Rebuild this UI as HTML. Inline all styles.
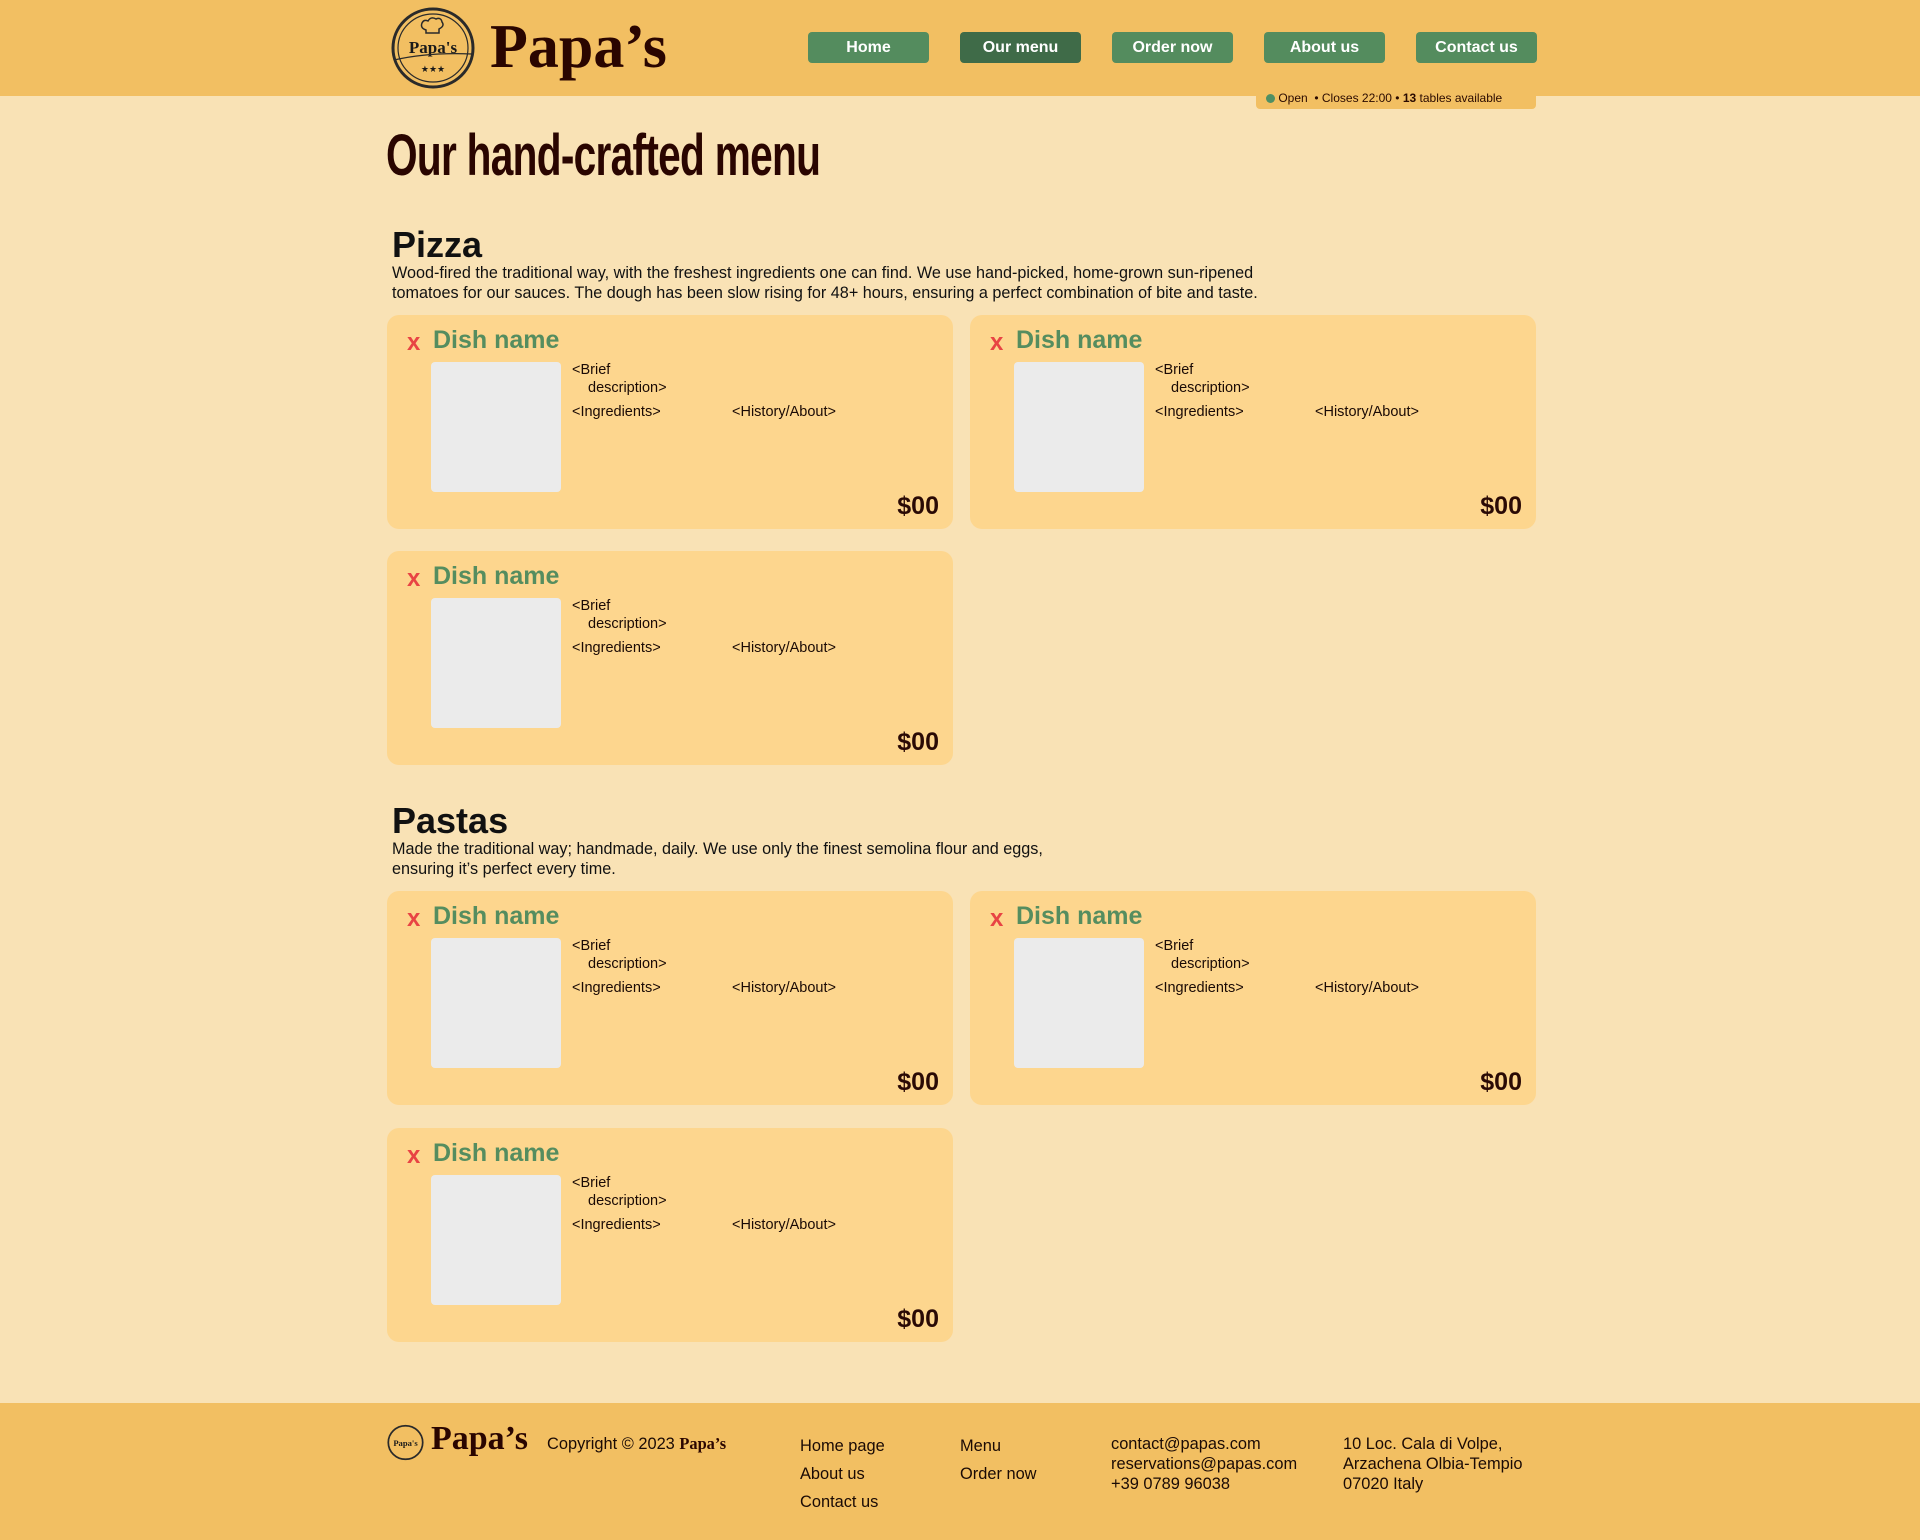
<!DOCTYPE html>
<html><head><meta charset="utf-8">
<style>
*{margin:0;padding:0;box-sizing:border-box}
body{width:1920px;height:1540px;background:#f9e2b5;font-family:"Liberation Sans",sans-serif;color:#1a0a05;position:relative;overflow:hidden}
.hdr{position:absolute;left:0;top:0;width:1920px;height:96px;background:#f2bf62}
.abs{position:absolute}
.brand{font-family:"Liberation Serif",serif;font-weight:bold;color:#2a0500}
.nav{position:absolute;top:32px;width:121px;height:31px;background:#548c5e;border-radius:4px;color:#fff;font-weight:bold;font-size:16px;text-align:center;line-height:31px}
.status{position:absolute;left:1256px;top:88px;width:280px;height:21px;background:#f2bf62;border-radius:0 0 4px 4px;font-size:12px;line-height:21px;padding-left:10px;color:#2a0a00}
.title{position:absolute;left:386px;top:122px;font-family:"Liberation Sans Narrow","Liberation Sans",sans-serif;font-weight:bold;font-size:58px;color:#2a0500;transform:scaleX(.7);transform-origin:left;letter-spacing:-1px}
h2{position:absolute;left:392px;font-size:36px;font-weight:bold;color:#111}
.desc{position:absolute;left:392px;font-size:16.2px;line-height:20px;color:#111}
.card{position:absolute;width:566px;height:214px;background:#fdd68e;border-radius:12px}
.card .x{position:absolute;left:20px;top:14px;color:#e84444;font-weight:bold;font-size:24px}
.card .dn{position:absolute;left:46px;top:11px;color:#558d5f;font-weight:bold;font-size:25px}
.card .img{position:absolute;left:44px;top:47px;width:130px;height:130px;background:#ebebeb;border-radius:4px}
.card .t{position:absolute;font-size:14.5px;color:#1a0a05}
.card .p{position:absolute;right:14px;bottom:8px;font-size:25px;font-weight:bold;color:#2a0a05}
.ftr{position:absolute;left:0;top:1403px;width:1920px;height:137px;background:#f2bf62}
.f{position:absolute;font-size:16.4px;color:#1a0a05;line-height:20px}
</style></head><body>
<div class="hdr"></div>
<svg class="abs" style="left:390px;top:6px" width="86" height="84" viewBox="0 0 86 84">
<ellipse cx="43" cy="42" rx="40" ry="39" fill="none" stroke="#2a2a2a" stroke-width="3"/>
<ellipse cx="43" cy="42" rx="35" ry="34" fill="none" stroke="#2a2a2a" stroke-width="1.2"/>
<path d="M36 24 q-6 -2 -4 -7 q2 -4 6 -2 q3 -5 8 -2 q5 -2 6 3 q3 4 -3 7 v4 h-13z" fill="none" stroke="#2a2a2a" stroke-width="1.5"/>
<text x="43" y="47" text-anchor="middle" font-family="Liberation Serif" font-size="17" font-weight="bold" fill="#1a1a1a">Papa's</text>
<path d="M4 54 q35 -8 78 -6" fill="none" stroke="#2a2a2a" stroke-width="1.3"/>
<text x="43" y="66" text-anchor="middle" font-size="9" fill="#1a1a1a">★★★</text>
</svg>
<div class="abs brand" style="left:490px;top:12px;font-size:62px">Papa’s</div>
<div class="nav" style="left:808px">Home</div>
<div class="nav" style="left:960px;background:#3f6b48">Our menu</div>
<div class="nav" style="left:1112px">Order now</div>
<div class="nav" style="left:1264px">About us</div>
<div class="nav" style="left:1416px">Contact us</div>
<div class="status"><span style="display:inline-block;width:9px;height:9px;border-radius:50%;background:#4f8f63;vertical-align:-1px"></span> Open &nbsp;• Closes 22:00 • <b>13</b> tables available</div>
<div class="title">Our hand-crafted menu</div>

<h2 style="top:224px">Pizza</h2>
<div class="desc" style="top:263px">Wood-fired the traditional way, with the freshest ingredients one can find. We use hand-picked, home-grown sun-ripened<br>tomatoes for our sauces. The dough has been slow rising for 48+ hours, ensuring a perfect combination of bite and taste.</div>

<h2 style="top:800px">Pastas</h2>
<div class="desc" style="top:839px">Made the traditional way; handmade, daily. We use only the finest semolina flour and eggs,<br>ensuring it’s perfect every time.</div>

<div class="card" style="left:387px;top:315px"><span class="x">x</span><span class="dn">Dish name</span><div class="img"></div><span class="t" style="left:185px;top:47px">&lt;Brief</span><span class="t" style="left:201px;top:65px">description&gt;</span><span class="t" style="left:185px;top:89px">&lt;Ingredients&gt;</span><span class="t" style="left:345px;top:89px">&lt;History/About&gt;</span><span class="p">$00</span></div>
<div class="card" style="left:970px;top:315px"><span class="x">x</span><span class="dn">Dish name</span><div class="img"></div><span class="t" style="left:185px;top:47px">&lt;Brief</span><span class="t" style="left:201px;top:65px">description&gt;</span><span class="t" style="left:185px;top:89px">&lt;Ingredients&gt;</span><span class="t" style="left:345px;top:89px">&lt;History/About&gt;</span><span class="p">$00</span></div>
<div class="card" style="left:387px;top:551px"><span class="x">x</span><span class="dn">Dish name</span><div class="img"></div><span class="t" style="left:185px;top:47px">&lt;Brief</span><span class="t" style="left:201px;top:65px">description&gt;</span><span class="t" style="left:185px;top:89px">&lt;Ingredients&gt;</span><span class="t" style="left:345px;top:89px">&lt;History/About&gt;</span><span class="p">$00</span></div>
<div class="card" style="left:387px;top:891px"><span class="x">x</span><span class="dn">Dish name</span><div class="img"></div><span class="t" style="left:185px;top:47px">&lt;Brief</span><span class="t" style="left:201px;top:65px">description&gt;</span><span class="t" style="left:185px;top:89px">&lt;Ingredients&gt;</span><span class="t" style="left:345px;top:89px">&lt;History/About&gt;</span><span class="p">$00</span></div>
<div class="card" style="left:970px;top:891px"><span class="x">x</span><span class="dn">Dish name</span><div class="img"></div><span class="t" style="left:185px;top:47px">&lt;Brief</span><span class="t" style="left:201px;top:65px">description&gt;</span><span class="t" style="left:185px;top:89px">&lt;Ingredients&gt;</span><span class="t" style="left:345px;top:89px">&lt;History/About&gt;</span><span class="p">$00</span></div>
<div class="card" style="left:387px;top:1128px"><span class="x">x</span><span class="dn">Dish name</span><div class="img"></div><span class="t" style="left:185px;top:47px">&lt;Brief</span><span class="t" style="left:201px;top:65px">description&gt;</span><span class="t" style="left:185px;top:89px">&lt;Ingredients&gt;</span><span class="t" style="left:345px;top:89px">&lt;History/About&gt;</span><span class="p">$00</span></div>

<div class="ftr"></div>
<svg class="abs" style="left:387px;top:1424px" width="37" height="37" viewBox="0 0 86 84">
<ellipse cx="43" cy="42" rx="40" ry="39" fill="none" stroke="#2a2a2a" stroke-width="4"/>
<text x="43" y="50" text-anchor="middle" font-family="Liberation Serif" font-size="20" font-weight="bold" fill="#1a1a1a">Papa's</text>
</svg>
<div class="abs brand" style="left:431px;top:1420px;font-size:34px">Papa’s</div>
<div class="f" style="left:547px;top:1434px">Copyright © 2023 <span class="brand">Papa’s</span></div>
<div class="f" style="left:800px;top:1432px;line-height:28px">Home page<br>About us<br>Contact us</div>
<div class="f" style="left:960px;top:1432px;line-height:28px">Menu<br>Order now</div>
<div class="f" style="left:1111px;top:1434px">contact@papas.com<br>reservations@papas.com<br>+39 0789 96038</div>
<div class="f" style="left:1343px;top:1434px">10 Loc. Cala di Volpe,<br>Arzachena Olbia-Tempio<br>07020 Italy</div>
</body></html>
